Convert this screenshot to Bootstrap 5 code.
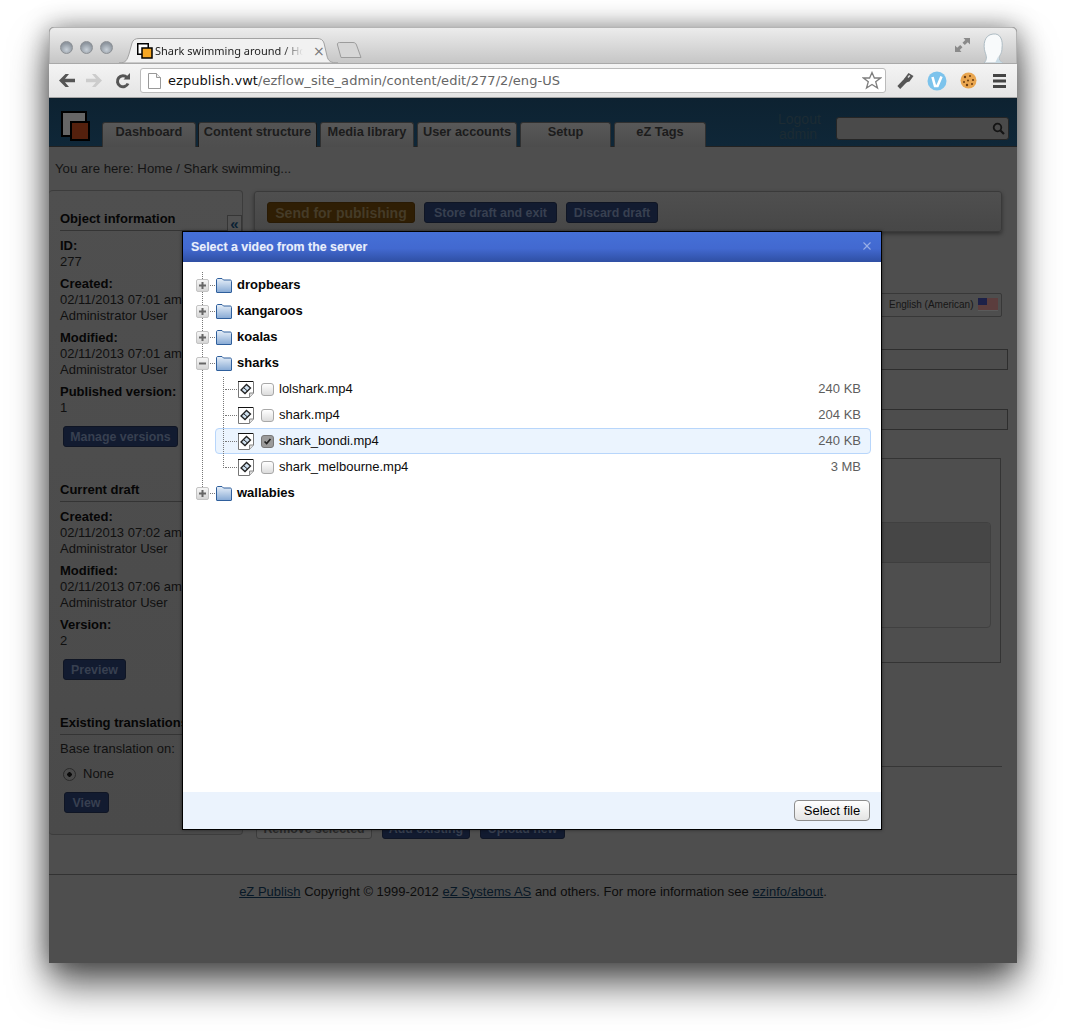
<!DOCTYPE html>
<html lang="en">
<head>
<meta charset="UTF-8" />
<title>Shark swimming around / Home</title>
<link href="https://cdn.jsdelivr.net/npm/bootstrap@5.3.3/dist/css/bootstrap.min.css" rel="stylesheet" />
<style>
  html, body { height: 1033px; overflow: hidden; background: #fff; }
  body { font-family: "Liberation Sans", Arial, sans-serif; font-size: 13px; line-height: 16px; color: #101010; }

  /* browser window */
  .browser-win { position: relative; width: 968px; height: 936px; margin: 27px 0 0 49px; border-radius: 5px 5px 0 0;
    box-shadow: 0 22px 38px rgba(0,0,0,.62), 0 0 26px rgba(0,0,0,.42); background: #4e4e4e; }
  .title-bar { height: 36px; border: 1px solid #b4b4b4; border-bottom: 0; border-radius: 5px 5px 0 0;
    background: linear-gradient(#ececec, #c6c6c6); padding-left: 10px; }
  .light { width: 13px; height: 13px; border-radius: 50%; border: 1px solid #8b8f94; background: radial-gradient(circle at 50% 70%, #c8d0d8, #8d959e 70%); }
  .lights { gap: 7px; margin-top: 13px; }
  .chrome-tab { position: relative; width: 219px; height: 25px; margin-left: 6px; }
  .chrome-tab svg.tab-shape { position: absolute; left: 0; top: 0; }
  .tab-inner { position: relative; height: 25px; padding: 5px 0 0 18px; gap: 2px; }
  .tab-title { width: 148px; white-space: nowrap; font: 11px/16px "Noto Sans", sans-serif; color: #222;
    -webkit-mask-image: linear-gradient(90deg, #000 128px, transparent 148px); mask-image: linear-gradient(90deg, #000 128px, transparent 148px); }
  .tab-x { font: 14px/16px "DejaVu Sans", sans-serif; color: #777; margin-left: 8px; }
  .new-tab { margin: 0 0 5px -2px; }
  .tool-bar { height: 35px; background: linear-gradient(#f4f4f4, #e4e4e4); border-top: 1px solid #a9a9a9; border-bottom: 1px solid #a4a4a4; padding: 0 9px 0 10px; }
  .omnibox { width: 746px; height: 25px; margin-left: 10px; border: 1px solid #bbb; border-radius: 3px; background: #fff; padding: 0 3px 0 7px;
    font: 13px/23px "DejaVu Sans", sans-serif; color: #666; }
  .omnibox b { font-weight: 400; color: #111; }
  .url-text { margin-left: 7px; white-space: nowrap; letter-spacing: .05px; }

  /* dimmed page */
  .ez-head { height: 49px; background: linear-gradient(#0d2231, #0f2738); border-top: 1px solid #0c1f2c; border-bottom: 1px solid #222; padding-left: 53px; position: relative; }
  .ez-logo { position: absolute; left: 12px; top: 12px; }
  .ez-tabs { align-self: flex-end; margin-bottom: -1px; }
  .ez-tab { height: 25px; border: 1px solid #303030; border-bottom: 0; border-radius: 3px 3px 0 0; background: linear-gradient(#585858, #4c4c4c);
    font-weight: 700; font-size: 12.8px; line-height: 18px; text-align: center; color: #1c1c1c; margin-right: 3px; }
  .ez-tab.is-active { border-left-color: #181818; border-right-color: #181818; background: linear-gradient(#545454, #4e4e4e); }
  .ez-tab:nth-child(1) { width: 94px; margin-right: 2px; }
  .ez-tab:nth-child(2) { width: 119px; }
  .ez-tab:nth-child(3) { width: 94px; }
  .ez-tab:nth-child(4) { width: 100px; }
  .ez-tab:nth-child(5) { width: 91px; }
  .ez-tab:nth-child(6) { width: 92px; margin-right: 0; }
  .ez-logout { position: absolute; left: 729px; top: 13px; width: 40px; text-align: center; font-size: 14px; line-height: 15px; color: #1c2b33; }
  .ez-search { position: absolute; left: 787px; top: 18px; width: 173px; height: 23px; border: 1px solid #262626; border-radius: 3px; background: #4a4a4a; }
  .ez-search svg { position: absolute; right: 3px; top: 4px; }
  .crumbs { height: 43px; padding: 14px 0 0 6px; font-size: 13.2px; color: #141414; }
  .side-panel { position: relative; width: 194px; height: 645px; flex: none; border: 1px solid #3c3c3c; border-left: 0; border-radius: 4px; padding: 0 0 0 11px; overflow: hidden; background: linear-gradient(#4f4f4f, #4a4a4a); }
  .side-head { margin: 0 0 7px; padding-bottom: 3px; border-bottom: 1px solid #343434; font-weight: 700; font-size: 13px; line-height: 16px; white-space: nowrap; color: #060606; }
  .side-head.first { margin-top: 20px; }
  .side-item { margin-bottom: 6px; white-space: nowrap; }
  .side-item b { display: block; color: #060606; }
  .base-line { margin-top: -1px; }
  .collapse-btn { position: absolute; right: 0; top: 24px; width: 15px; height: 17px; border: 1px solid #363636; background: #525252; color: #0c2234; font: 700 15px/14px "Liberation Sans", sans-serif; text-align: center; }
  .ez-btn { --bs-btn-padding-x: 0; --bs-btn-padding-y: 0; --bs-btn-font-size: 12.4px; --bs-btn-font-weight: 700; --bs-btn-line-height: 20px; --bs-btn-border-radius: 3px;
    --bs-btn-color: #384050; --bs-btn-bg: #121b30; --bs-btn-border-color: #0f1524; height: 21px; text-align: center; display: block; }
  .ez-btn.orange { --bs-btn-font-size: 14px; --bs-btn-color: #453b28; --bs-btn-bg: #2f1e04; --bs-btn-border-color: #291a04; }
  .ez-btn.plain { --bs-btn-color: #2a2a2a; --bs-btn-bg: #525252; --bs-btn-border-color: #3c3c3c; }
  .side-btn-wrap { margin: 10px 0 35px 3px; }
  .w-manage { width: 115px; } .w-preview { width: 63px; } .w-view { width: 45px; }
  .w-send { width: 148px; } .w-store { width: 133px; } .w-discard { width: 92px; }
  .w-remove { width: 116px; } .w-add { width: 88px; } .w-upload { width: 85px; }
  .main-col { width: 754px; margin-left: 11px; flex: none; }
  .top-tools { width: 748px; height: 41px; margin-top: 1px; border: 1px solid #3a3a3a; border-radius: 3px; background: linear-gradient(#4f4f4f, #474747); box-shadow: 0 2px 4px rgba(0,0,0,.4); padding: 10px 12px; gap: 9px; }
  .lang-box { width: 122px; height: 24px; margin: 61px 0 0 626px; border: 1px solid #383838; border-radius: 2px; font-size: 10px; line-height: 22px; padding-left: 8px; gap: 5px; color: #161616; white-space: nowrap; }
  .dim-input { height: 21px; width: 754px; border: 1px solid #2e2e2e; background: #4d4d4d; }
  .dim-first { margin-top: 32px; }
  .dim-second { margin-top: 39px; }
  .dim-box { position: relative; width: 747px; height: 205px; margin-top: 28px; border: 1px solid #343434; }
  .dim-inner { position: absolute; right: 9px; top: 63px; width: 600px; height: 106px; border: 1px solid #404040; border-radius: 4px; }
  .dim-inner div { height: 40px; border-bottom: 1px solid #3e3e3e; background: #464646; border-radius: 4px 4px 0 0; }
  .dim-rule { width: 748px; margin: 103px 0 0; border-top: 1px solid #363636; }
  .bottom-btns { margin: 51px 0 0 2px; gap: 10px; }
  .ez-foot { margin-top: 35px; border-top: 1px solid #323232; padding-top: 9px; text-align: center; color: #0c0c0c; }
  .ez-foot a { color: #081826; }

  /* file dialog */
  .file-dialog { position: absolute; left: 133px; top: 204px; width: 700px; height: 599px; border: 1px solid #000; border-radius: 0; background: #fff; box-shadow: 0 0 3px rgba(0,0,0,.5); }
  .file-dialog .modal-header { height: 30px; padding: 0 9px 0 8px; border: 0; border-radius: 0; background: linear-gradient(#4570d8 0, #4269d0 55%, #2f4fa3 100%); }
  .file-dialog .modal-title { font-size: 12.4px; font-weight: 700; line-height: 16px; color: #e8eefb; text-shadow: 0 0 1px rgba(255,255,255,.3); }
  .file-dialog .btn-close { width: 10px; height: 10px; padding: 0; margin: 0 0 2px; background-size: 10px; opacity: .45; }
  .file-dialog .modal-body { padding: 10px 0 0; position: relative; }
  .file-dialog .modal-footer { height: 37px; padding: 0 11px 0 0; border: 0; border-radius: 0; background: #ebf3fd; }
  .select-btn { --bs-btn-padding-x: 0; --bs-btn-padding-y: 0; --bs-btn-font-size: 13px; --bs-btn-line-height: 19px; --bs-btn-border-radius: 4px; --bs-btn-border-color: #8d8d8d; --bs-btn-color: #000;
    width: 76px; height: 21px; margin: 0; background: linear-gradient(#fff, #e4e4e4); }
  .tree { position: relative; margin: 0; }
  .tree::before { content: ""; position: absolute; left: 19px; top: 0; height: 215px; border-left: 1px dotted #777; }
  .tree-row { height: 26px; }
  .folder-row { margin-left: 13px; font-weight: 700; color: #060606; position: relative; }
  .folder-row .stub { width: 5px; border-top: 1px dotted #777; margin: 0 1px; }
  .folder-row .xpand { position: relative; z-index: 1; }
  .folder-row .fold { margin: 0 5px 0 0; }
  .kids { position: relative; margin: 0; }
  .kids::before { content: ""; position: absolute; left: 40px; top: 1px; height: 91px; border-left: 1px dotted #777; z-index: 1; }
  .file-row { position: relative; margin: 0 10px 0 32px; border: 1px solid transparent; border-radius: 4px; padding: 0 9px 0 22px; color: #0c0c0c; }
  .file-row::before { content: ""; position: absolute; left: 9px; top: 12px; width: 12px; border-top: 1px dotted #777; }
  .file-row.is-picked { background: #ebf4fe; border-color: #b8d6fb; }
  .file-row .form-check-input { width: 13px; height: 13px; margin: 0 5px 0 7px; flex: none; border-color: #a8a8a8; border-radius: 3px; background: linear-gradient(#fff, #dcdcdc); }
  .file-row .form-check-input:checked { border-color: #777; background: #9b9b9b url("data:image/svg+xml,%3csvg xmlns='http://www.w3.org/2000/svg' viewBox='0 0 13 13'%3e%3cpath fill='none' stroke='%23222' stroke-width='2' d='M3 6.5l2.5 2.5L10 3.5'/%3e%3c/svg%3e") center/11px no-repeat; }
  .file-size { margin-left: auto; color: #5e5e5e; }
  .radio-row { margin: 9px 0 10px 3px; height: 16px; }
  .radio-row .form-check-input { width: 13px; height: 13px; margin: 0 7px 0 0; background-color: #4a4a4a; border-color: #2a2a2a; --bs-form-check-bg-image: none; background-image: radial-gradient(circle, #0a0a0a 0 2px, transparent 2.5px); }
</style>
</head>
<body>
<div class="browser-win">
  <div class="title-bar d-flex align-items-end">
    <div class="lights d-flex align-self-start">
      <span class="light"></span><span class="light"></span><span class="light"></span>
    </div>
    <div class="chrome-tab">
      <svg class="tab-shape" width="219" height="25" viewBox="0 0 219 25"><path d="M0 25C7 25 8 22 10 16L13 5C14 2 16 .5 20 .5H198C202 .5 204 2 205 5L208 18C209 23 212 25 219 25Z" fill="#f1f1f1" stroke="#a2a2a2"/></svg>
      <div class="tab-inner d-flex align-items-start">
        <svg width="16" height="16" viewBox="0 0 16 16" class="flex-none"><rect x=".75" y=".75" width="10.5" height="10.5" fill="#fff" stroke="#000" stroke-width="1.5"/><rect x="5" y="5" width="10" height="10" fill="#f5a623" stroke="#000" stroke-width="1.5"/></svg>
        <span class="tab-title">Shark swimming around / Ho</span>
        <span class="tab-x">×</span>
      </div>
    </div>
    <svg class="new-tab" width="27" height="16" viewBox="0 0 27 16"><path d="M5 15.5L1.5 3C1 1.500 2 .5 3.500 .5H17C19 .5 20 1.500 20.500 3L25 15.500Z" fill="#d6d6d6" stroke="#9c9c9c"/></svg>
    <svg class="ms-auto align-self-start" style="margin-top:9px" width="15" height="15" viewBox="0 0 15 15"><path d="M8.500 1H15V7.500L12.800 5.300L9.800 8L7.500 5.800L10.300 3ZM6.500 15H0V8.500L2.200 10.700L5.200 8L7.500 10.200L4.700 13Z" fill="#8a8a8a"/></svg>
    <svg class="align-self-end" style="margin:0 12px 0 12px" width="22" height="30" viewBox="0 0 22 30"><path d="M2 30C5 27 5 24 3 19C1 12 2 2 11 1C19 0 21 8 20 15C20 20 18 22 17 24C17 27 18 29 21 30Z" fill="#f8fafb" stroke="#aebcc4"/><path d="M16 24C17 27 18 29 21 30H13C14 28 15 26 16 24Z" fill="#c9dbe5"/></svg>
  </div>
  <div class="tool-bar d-flex align-items-center">
    <svg width="16" height="13" viewBox="0 0 16 13"><path d="M6.500 0L0 6.500L6.500 13H10L6 8.300H16V4.700H6L10 0Z" fill="#555"/></svg>
    <svg style="margin-left:11px" width="16" height="13" viewBox="0 0 16 13"><path d="M9.500 0L16 6.500L9.500 13H6L10 8.300H0V4.700H10L6 0Z" fill="#ccc"/></svg>
    <svg style="margin-left:13px" width="15" height="16" viewBox="0 0 15 16"><path d="M12 4.500A5.500 5.500 0 1 0 13 10.500" fill="none" stroke="#555" stroke-width="3"/><path d="M8.500 6.500H15V0Z" fill="#555"/></svg>
    <div class="omnibox d-flex align-items-center">
      <svg width="13" height="16" viewBox="0 0 13 16"><path d="M.5 .5H8.500L12.500 4.500V15.500H.5Z" fill="#fff" stroke="#999"/><path d="M8.500 .5V4.500H12.500" fill="#eee" stroke="#999"/></svg>
      <span class="url-text"><b>ezpublish.vwt</b>/ezflow_site_admin/content/edit/277/2/eng-US</span>
      <svg class="ms-auto" width="20" height="19" viewBox="0 0 20 19"><path d="M10 1.500L12.400 7H18.500L13.700 10.800L15.500 17L10 13.500L4.500 17L6.300 10.800L1.500 7H7.600Z" fill="#fff" stroke="#7f7f7f" stroke-width="1.300"/></svg>
    </div>
    <svg style="margin-left:11px" width="17" height="17" viewBox="0 0 17 17"><path d="M1.800 15.500L9 8" stroke="#555" stroke-width="4"/><path d="M7 7L11.500 1L16.500 4L12.500 9.500L9 10.500Z" fill="#555"/><path d="M11 5.500L12.800 3.500" stroke="#ddd" stroke-width="1.500"/></svg>
    <svg style="margin-left:13px" width="20" height="20" viewBox="0 0 20 20"><circle cx="10" cy="10" r="9.500" fill="#7cc3ec"/><path d="M5.500 6L8 15H10.500L14.500 5.500" fill="none" stroke="#fff" stroke-width="2.600"/></svg>
    <svg style="margin-left:13px" width="17" height="17" viewBox="0 0 17 17"><circle cx="8.500" cy="8.500" r="8" fill="#e9a650"/><g fill="#6b3d12"><circle cx="5" cy="5" r="1.200"/><circle cx="10" cy="4" r="1"/><circle cx="13" cy="8" r="1.100"/><circle cx="8" cy="8.500" r="1"/><circle cx="4" cy="10" r="1"/><circle cx="7" cy="13" r="1.200"/><circle cx="12" cy="12" r="1"/></g></svg>
    <svg style="margin-left:16px" width="13" height="14" viewBox="0 0 13 14"><path d="M0 0H13V3H0ZM0 5.500H13V8.500H0ZM0 11H13V14H0Z" fill="#444"/></svg>
  </div>

  <div class="ez-page">
    <div class="ez-head d-flex">
      <svg class="ez-logo" width="30" height="32" viewBox="0 0 30 32"><rect x="1" y="1" width="24" height="24" fill="#666" stroke="#000" stroke-width="2"/><rect x="10" y="11" width="18" height="18" fill="#54200d" stroke="#000" stroke-width="2"/></svg>
      <ul class="ez-tabs nav">
        <li class="ez-tab">Dashboard</li>
        <li class="ez-tab is-active">Content structure</li>
        <li class="ez-tab">Media library</li>
        <li class="ez-tab">User accounts</li>
        <li class="ez-tab">Setup</li>
        <li class="ez-tab">eZ Tags</li>
      </ul>
      <div class="ez-logout">Logout admin</div>
      <div class="ez-search"><svg width="13" height="13" viewBox="0 0 13 13"><circle cx="5.500" cy="5.500" r="3.800" fill="none" stroke="#141414" stroke-width="1.800"/><path d="M8.500 8.500L12 12" stroke="#141414" stroke-width="2.200"/></svg></div>
    </div>
    <div class="crumbs">You are here: Home / Shark swimming...</div>

    <div class="d-flex">
      <div class="side-panel">
        <button class="collapse-btn p-0" type="button">«</button>
        <h6 class="side-head first">Object information</h6>
        <div class="side-item"><b>ID:</b>277</div>
        <div class="side-item"><b>Created:</b>02/11/2013 07:01 am<br />Administrator User</div>
        <div class="side-item"><b>Modified:</b>02/11/2013 07:01 am<br />Administrator User</div>
        <div class="side-item"><b>Published version:</b>1</div>
        <div class="side-btn-wrap"><a class="btn ez-btn w-manage">Manage versions</a></div>
        <h6 class="side-head">Current draft</h6>
        <div class="side-item"><b>Created:</b>02/11/2013 07:02 am<br />Administrator User</div>
        <div class="side-item"><b>Modified:</b>02/11/2013 07:06 am<br />Administrator User</div>
        <div class="side-item"><b>Version:</b>2</div>
        <div class="side-btn-wrap"><a class="btn ez-btn w-preview">Preview</a></div>
        <h6 class="side-head">Existing translations</h6>
        <div class="base-line">Base translation on:</div>
        <div class="radio-row d-flex align-items-center"><input class="form-check-input" type="radio" checked /><span>None</span></div>
        <div class="ms-1"><a class="btn ez-btn w-view">View</a></div>
      </div>

      <div class="main-col">
        <div class="top-tools d-flex">
          <a class="btn ez-btn orange w-send">Send for publishing</a>
          <a class="btn ez-btn w-store">Store draft and exit</a>
          <a class="btn ez-btn w-discard">Discard draft</a>
        </div>
        <div class="lang-box d-flex">English (American)
          <svg class="mt-1" width="20" height="13" viewBox="0 0 20 13"><rect width="20" height="13" fill="#5a5a5a"/><path d="M0 1H20M0 3H20M0 5H20M0 7H20M0 9H20M0 11H20" stroke="#5c2020" stroke-width="1"/><rect width="9" height="7" fill="#1d2148"/></svg>
        </div>
        <div class="dim-input dim-first"></div>
        <div class="dim-input dim-second"></div>
        <div class="dim-box"><div class="dim-inner"><div></div></div></div>
        <div class="dim-rule"></div>
        <div class="bottom-btns d-flex">
          <a class="btn ez-btn plain w-remove">Remove selected</a>
          <a class="btn ez-btn w-add">Add existing</a>
          <a class="btn ez-btn w-upload">Upload new</a>
        </div>
      </div>
    </div>

    <div class="ez-foot"><a href="#">eZ Publish</a> Copyright © 1999-2012 <a href="#">eZ Systems AS</a> and others. For more information see <a href="#">ezinfo/about</a>.</div>
  </div>

  <div class="file-dialog modal-content d-flex flex-column">
    <div class="modal-header">
      <h5 class="modal-title">Select a video from the server</h5>
      <button type="button" class="btn-close btn-close-white" aria-label="Close"></button>
    </div>
    <div class="modal-body flex-grow-1">
      <ul class="tree list-unstyled" id="fileTree"></ul>
    </div>
    <div class="modal-footer">
      <button type="button" class="btn select-btn">Select file</button>
    </div>
  </div>
</div>

<svg width="0" height="0" class="position-absolute">
  <defs>
    <linearGradient id="folderFill" x1="0" y1="0" x2="0" y2="1"><stop offset="0" stop-color="#e8f0f9"/><stop offset="1" stop-color="#86a9d4"/></linearGradient>
    <linearGradient id="boxFill" x1="0" y1="0" x2="0" y2="1"><stop offset="0" stop-color="#f8f8f8"/><stop offset="1" stop-color="#d4d4d4"/></linearGradient>
  </defs>
</svg>
<script src="https://cdn.jsdelivr.net/npm/bootstrap@5.3.3/dist/js/bootstrap.bundle.min.js"></script>
<script>
  // tree content
  const tree = [
    { name: "dropbears" },
    { name: "kangaroos" },
    { name: "koalas" },
    { name: "sharks", open: true, files: [
      { name: "lolshark.mp4", size: "240 KB" },
      { name: "shark.mp4", size: "204 KB" },
      { name: "shark_bondi.mp4", size: "240 KB", picked: true },
      { name: "shark_melbourne.mp4", size: "3 MB" }
    ] },
    { name: "wallabies" }
  ];

  const xpand = (open) => `<svg class="xpand" width="13" height="13" viewBox="0 0 13 13"><rect x=".5" y=".5" width="12" height="12" rx="1.500" fill="url(#boxFill)" stroke="#c4c4c4"/><path d="${open ? "M3 6.500H10" : "M3 6.500H10M6.500 3V10"}" stroke="#666" stroke-width="2"/></svg>`;
  const folder = `<svg class="fold" width="16" height="15" viewBox="0 0 16 15"><path d="M.5 14V2C.5 1 1 .5 2 .5H6L7.500 2H14C15 2 15.500 2.500 15.500 3.500V14C15.500 14.300 15.300 14.500 15 14.500H1C.7 14.500 .5 14.300 .5 14Z" fill="url(#folderFill)" stroke="#2f5f9c"/></svg>`;
  const fileIcon = `<svg width="16" height="17" viewBox="0 0 16 17" class="flex-none"><path d="M.5 .5H15.500V12L11.500 16.500H.5Z" fill="#fff" stroke="#777"/><path d="M0 .5H15" stroke="#111"/><path d="M11.500 16.500V12H15.500" fill="#ddd" stroke="#888"/><path d="M3 9L8.500 3.500L12.500 7L7 12.500Z" fill="#cfe0ef" stroke="#222" stroke-width="1.300"/><path d="M5.500 6.500L9.500 10" stroke="#222"/></svg>`;

  document.getElementById("fileTree").innerHTML = tree.map((node) => {
    let html = `<li><div class="tree-row folder-row d-flex align-items-center">${xpand(node.open)}<span class="stub"></span>${folder}<span>${node.name}</span></div>`;
    if (node.files) {
      html += `<ul class="kids list-unstyled">` + node.files.map((f) =>
        `<li class="tree-row file-row d-flex align-items-center${f.picked ? " is-picked" : ""}">${fileIcon}<input class="form-check-input" type="checkbox"${f.picked ? " checked" : ""} /><span>${f.name}</span><span class="file-size">${f.size}</span></li>`
      ).join("") + `</ul>`;
    }
    return html + `</li>`;
  }).join("");
</script>
</body>
</html>
